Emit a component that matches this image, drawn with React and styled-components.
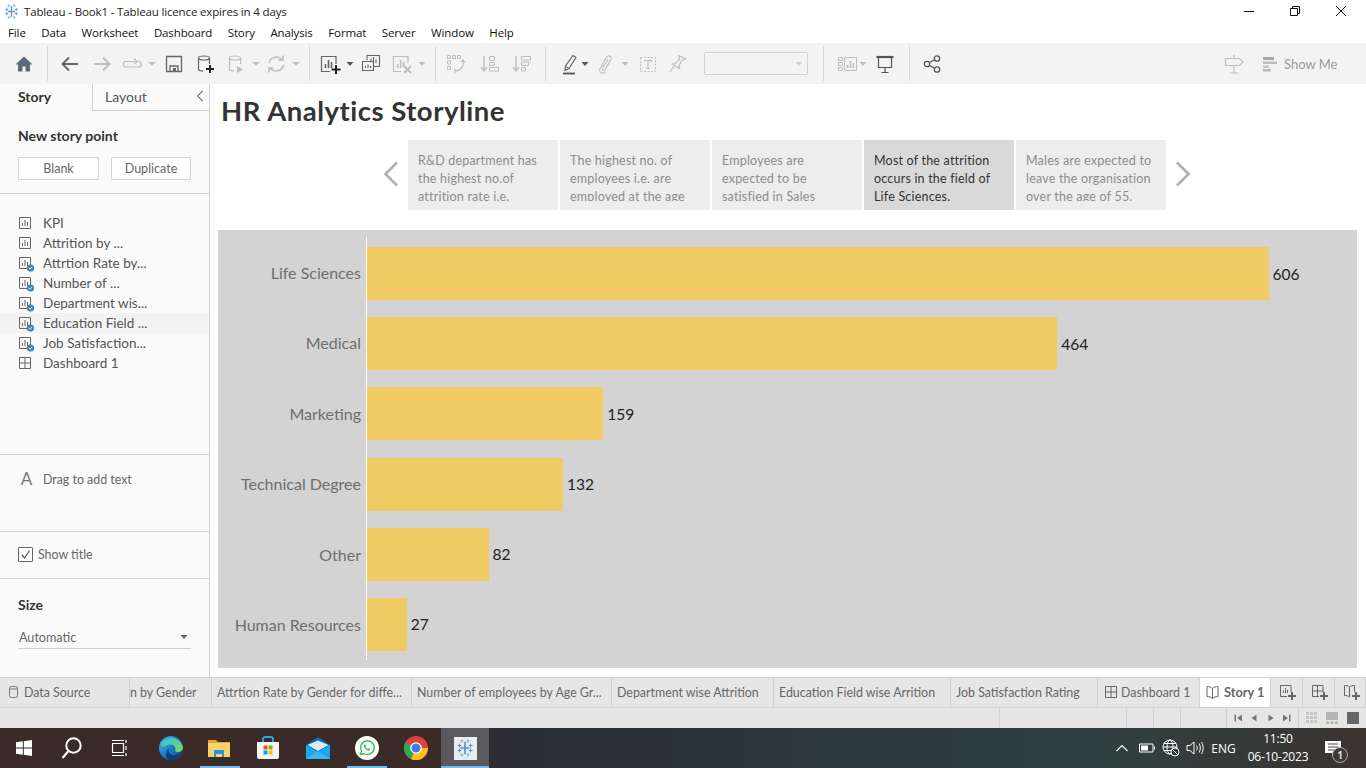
import React from "react";
import styled, { createGlobalStyle } from "styled-components";

const Global = createGlobalStyle`
  html, body { margin: 0; padding: 0; background: #fff; }
  #root { width: 1366px; height: 768px; overflow: hidden; }
  * { box-sizing: border-box; }
`;

const Page = styled.div`
  width: 1366px; height: 768px; display: flex; flex-direction: column;
  font-family: "Lato", "Liberation Sans", sans-serif; color: #555; overflow: hidden;
`;

/* ---------- title + menu ---------- */
const TitleBar = styled.div`
  height: 22px; display: flex; align-items: center; padding-left: 3px; background: #fff;
  font: 11.5px "Open Sans", "Noto Sans", sans-serif; letter-spacing: -0.15px; color: #222;
`;
const TitleText = styled.span` margin-left: 4px; `;
const WinButtons = styled.div` margin-left: auto; display: flex; height: 22px; padding-right: 2px; `;
const WinBtn = styled.div` width: 46px; display: flex; align-items: center; justify-content: center; `;
const MenuBar = styled.div`
  height: 21px; display: flex; align-items: center; padding-left: 8px; gap: 15.55px; background: #fff;
  font: 11.5px "Open Sans", "Noto Sans", sans-serif; letter-spacing: -0.12px; color: #111;
`;

/* ---------- toolbar ---------- */
const ToolBar = styled.div`
  height: 41px; background: #f3f3f3; display: flex; align-items: center; flex: none;
`;
const ToolSlot = styled.div`
  flex: none; width: ${p => p.$w}px; margin-left: ${p => p.$ml}px; height: 24px;
  display: flex; align-items: center; justify-content: center;
`;
const ToolSep = styled.div`
  flex: none; width: 1px; height: 35px; background: #d6d6d6; margin-left: ${p => p.$ml}px;
`;
const ToolSelect = styled.div`
  flex: none; width: 104px; height: 23px; margin-left: ${p => p.$ml}px; border: 1px solid #d2d2d2; border-radius: 2px;
  display: flex; align-items: center; justify-content: flex-end; padding-right: 4px;
`;
const ShowMe = styled.div`
  flex: none; display: flex; align-items: center; gap: 6px; margin-left: ${p => p.$ml}px; color: #9a9a9a; font-size: 13px;
`;

/* ---------- body ---------- */
const Body = styled.div` height: 593px; display: flex; flex: none; `;
const Side = styled.aside`
  width: 210px; flex: none; background: #fafafa; border-right: 1px solid #d4d4d4; display: flex; flex-direction: column;
`;
const SideTabs = styled.div` height: 27px; display: flex; flex: none; `;
const StoryTab = styled.div`
  width: 93px; border-right: 1px solid #d0d0d0; padding: 4px 0 0 18px; font-size: 14px; font-weight: 700; color: #333;
`;
const LayoutTab = styled.div`
  flex: 1; border-bottom: 1px solid #d0d0d0; padding: 4px 0 0 12px; font-size: 14px; color: #555;
  display: flex; justify-content: space-between;
`;
const Chevron = styled.span` padding: 2px 5px 0 0; line-height: 0; `;
const Section = styled.section`
  height: ${p => p.$h}px; flex: none; border-bottom: 1px solid #d0d0d0; padding: ${p => p.$pad || "0"};
`;
const LastSection = styled.section` flex: 1; padding: 18px 18px 0; `;
const SectionTitle = styled.div` font-size: 14px; font-weight: 700; color: #333; line-height: 16px; `;
const SideBtns = styled.div` display: flex; gap: 12px; margin-top: 13px; `;
const SideBtn = styled.div`
  width: ${p => p.$w}px; height: 23px; border: 1px solid #d2d2d2; border-radius: 1px; background: #fff;
  display: flex; align-items: center; justify-content: center; font-size: 12.5px; color: #666;
`;
const StoryList = styled.ul` list-style: none; margin: 0; padding: 0; `;
const StoryRow = styled.li`
  height: 20px; display: flex; align-items: center; padding-left: 18px; gap: 9px; font-size: 13.5px; color: #555;
  background: ${p => (p.$on ? "#f3f3f3" : "transparent")};
`;
const ListIcon = styled.span` width: 16px; flex: none; `;
const DragRow = styled.div` display: flex; align-items: center; padding: 14px 0 0 20px; gap: 10px; font-size: 12.4px; color: #666; `;
const BigA = styled.span` font-size: 17px; color: #777; width: 13px; text-align: center; line-height: 20px; `;
const CheckRow = styled.div` display: flex; align-items: center; gap: 5px; padding: 15px 0 0 18px; font-size: 12.4px; color: #666; `;
const CheckBox = styled.div`
  width: 15px; height: 15px; border: 1px solid #666; border-radius: 1px; background: #fff;
  display: flex; align-items: center; justify-content: center;
`;
const SizeSelect = styled.div`
  margin-top: 13px; height: 23px; border-bottom: 1px solid #cfcfcf; display: flex; align-items: center;
  justify-content: space-between; padding: 0 3px 0 1px; font-size: 12.6px; color: #666;
`;

/* ---------- story ---------- */
const Main = styled.main` flex: 1; background: #fff; display: flex; flex-direction: column; padding: 0 9px 9px 8px; min-width: 0; `;
const StoryTitle = styled.h1`
  margin: 0; height: 56px; padding: 10px 0 0 3px; font-size: 27.5px; line-height: 34px; font-weight: 700; color: #333; letter-spacing: 0.5px;
`;
const Nav = styled.div` height: 70px; display: flex; align-items: center; justify-content: center; flex: none; padding-right: 1px; `;
const Arrow = styled.div` width: 34px; display: flex; justify-content: center; padding-bottom: 2px; `;
const Points = styled.div` display: flex; gap: 2px; `;
const Point = styled.div`
  width: 150px; height: 70px; overflow: hidden; padding: 12px 10px 0 10px; font-size: 12.5px; line-height: 18px; letter-spacing: 0.2px;
  background: ${p => (p.$on ? "#d9d9d9" : "#ededed")}; color: ${p => (p.$on ? "#333" : "#8c8c8c")};
`;
const PointClip = styled.div` height: 49px; overflow: hidden; `;
const Chart = styled.div`
  margin-top: 20px; flex: 1; background: #d3d3d3; display: grid; grid-template-columns: 148px 1fr; padding: 7px 0 8px;
`;
const Labels = styled.div` display: flex; flex-direction: column; gap: 17.4px; padding: 9px 5px 0 0; `;
const Label = styled.div`
  height: 53px; display: flex; align-items: center; justify-content: flex-end; font-size: 16px; color: #6e6e6e;
`;
const Plot = styled.div` border-left: 1px solid #fff; display: flex; flex-direction: column; gap: 17.2px; padding-top: 10px; `;
const BarRow = styled.div` height: 53px; display: flex; align-items: center; gap: 4px; `;
const Bar = styled.div` height: 53px; background: #f0cb63; `;
const Value = styled.span` font-size: 15.5px; color: #222; `;

/* ---------- tabs + status ---------- */
const Tabs = styled.div`
  height: 31px; flex: none; display: flex; background: #e6e6e6; border-top: 1px solid #d2d2d2; border-bottom: 1px solid #d2d2d2;
`;
const Tab = styled.div`
  width: ${p => p.$w}px; flex: none; display: flex; align-items: center;
  padding: 0 0 1px ${p => (p.$pad === undefined ? 5 : p.$pad)}px; gap: ${p => p.$gap || 5}px; border-right: 1px solid #d2d2d2; color: #666; white-space: nowrap;
  background: ${p => (p.$on ? "#fff" : "transparent")};
  font-size: ${p => (p.$on ? 12.8 : 12.4)}px;
  font-weight: ${p => (p.$on ? 700 : 400)};
`;
const Status = styled.div` height: 20px; flex: none; display: flex; background: #e6e6e6; `;
const StatusCell = styled.div`
  width: ${p => p.$w}px; flex: none; border-right: 1px solid #d2d2d2; display: flex; align-items: center; justify-content: center;
`;
const StatusFill = styled.div` display: flex; align-items: center; flex: 1; justify-content: space-around; padding: 0 3px; `;

/* ---------- taskbar ---------- */
const Taskbar = styled.footer`
  height: 40px; flex: none; display: flex; align-items: center; color: #fff;
  background: linear-gradient(90deg, #3a2a28 0%, #3a2a28 32%, #2a2d36 38%, #2c3a40 65%, #30403f 82%, #3b3431 100%);
  font: 12px "Open Sans", "Noto Sans", sans-serif;
`;
const TaskSlot = styled.div`
  width: ${p => p.$w}px; margin-left: ${p => p.$ml || 0}px; flex: none; height: 40px; display: flex; align-items: center; justify-content: center; position: relative;
  background: ${p => (p.$on ? "#5a5a5e" : "transparent")};
`;
const Running = styled.span`
  position: absolute; left: ${p => p.$l}px; right: ${p => p.$r}px; bottom: 0; height: 2px; background: #76b9ed;
`;
const TileBox = styled.div`
  background: #e9edf0; width: 23px; height: 23px; display: flex; align-items: center; justify-content: center;
`;
const Tray = styled.div` margin-left: auto; display: flex; align-items: center; height: 40px; `;
const TraySlot = styled.div` width: ${p => p.$w}px; display: flex; align-items: center; justify-content: center; flex: none; `;
const Clock = styled.div` width: 76px; text-align: center; line-height: 18px; font-size: 12px; letter-spacing: -0.2px; `;
const Notify = styled.div` width: 50px; height: 40px; padding-left: 9px; display: flex; align-items: center; position: relative; `;
const Badge = styled.span`
  position: absolute; left: 16px; top: 19px; width: 16px; height: 16px; border-radius: 50%; background: #3a3a3a; border: 1px solid #aaa;
  font-size: 10px; line-height: 14px; text-align: center; font-weight: 700; color: #ddd;
`;

/* ---------- icons ---------- */
const D = "#666";
const L = "#bdbdbd";
const Svg = ({ w = 24, h = 24, children }) => (
  <svg width={w} height={h} viewBox={`0 0 ${w} ${h}`} fill="none" style={{ display: "block", overflow: "visible" }}>{children}</svg>
);
const Caret = ({ c = L }) => <Svg w={8} h={6}><path d="M0.5 1h7L4 5z" fill={c} /></Svg>;
const Home = () => <Svg><path d="M12 4.5 3.5 12.5H6v7h4.5v-5h3v5H18v-7h2.5z" fill="#5b6b7b" /></Svg>;
const Back = ({ c = D, flip }) => (
  <Svg><path d={flip ? "M4 12h15M13 5.5l6.500 6.500-6.500 6.500" : "M20 12H5M11 5.500 4.500 12l6.500 6.500"} stroke={c} strokeWidth="2" /></Svg>
);
const Redo = () => <Svg><path d="M16 9.500h2.500a2.500 2.500 0 0 1 0 5.500H6a2.700 2.700 0 0 1 0-5.500h9" stroke={L} strokeWidth="1.200" /><path d="M14 6.500 17 9.500l-3 2.500" stroke={L} strokeWidth="1.200" /></Svg>;
const Save = () => <Svg><path d="M4.500 4.500h15v15h-15z" stroke={D} strokeWidth="1.300" /><path d="M8 19v-5h8v5" stroke={D} strokeWidth="1.300" /><path d="M11 16h3v3h-3z" fill={D} /></Svg>;
const Cyl = ({ c }) => <><ellipse cx="11" cy="6" rx="5.500" ry="2" stroke={c} strokeWidth="1.200" /><path d="M5.500 6v11c0 1.200 2 2 4.500 2M16.500 6v6" stroke={c} strokeWidth="1.200" /></>;
const DsAdd = () => <Svg><Cyl c={D} /><path d="M17 13v8M13 17h8" stroke="#222" strokeWidth="2" /></Svg>;
const DsRun = () => <Svg><Cyl c={L} /><path d="M13 14l6 3.500-6 3.500z" fill={L} /></Svg>;
const Refresh = () => <Svg><path d="M5 11a7.500 7.500 0 0 1 13-3.500M19.500 13a7.500 7.500 0 0 1-13 3.500" stroke={L} strokeWidth="1.500" /><path d="M19 3.500V8h-4.500M5 20.500V16h4.500" stroke={L} strokeWidth="1.500" /></Svg>;
const NewSheet = () => <Svg w={26} h={24}><path d="M18 12V4.500H3.500v15H12" stroke={D} strokeWidth="1.200" /><path d="M7.500 16v-4M10.500 16V8M13.500 16v-6" stroke={D} strokeWidth="1.600" /><path d="M18 13v9M13.500 17.500h9" stroke="#222" strokeWidth="2" /></Svg>;
const Dup = () => <Svg><path d="M8 8V3.500h12.500v11H15" stroke={D} strokeWidth="1.100" /><path d="M3.500 9.500h11v9h-11z" stroke={D} strokeWidth="1.100" fill="#f3f3f3" /><path d="M12 9V6.500M14.500 9V5M17 11V7.500M6.500 16v-2M9 16v-3.500M11.500 16v-2" stroke={D} strokeWidth="1.100" /></Svg>;
const Clear = () => <Svg w={26} h={24}><path d="M19 11V4.500H4.500v15H12" stroke={L} strokeWidth="1.200" /><path d="M8.500 16v-4M11.500 16V8M14.500 15v-5" stroke={L} strokeWidth="1.600" /><path d="M15 14l7 7M22 14l-7 7" stroke={L} strokeWidth="2" /></Svg>;
const Swap = () => <Svg><path d="M3.500 3.500h3v3h-3zM8.500 3.500h3v3h-3zM13.500 3.500h3v3h-3zM3.500 9h3v3h-3zM3.500 14.500h3v3h-3z" stroke={L} /><path d="M19 8c1.500 5-1 10-7 11M10 17l2 2-2 2.500M17 10l2-2 2 2.500" stroke={L} strokeWidth="1.200" /></Svg>;
const SortA = () => <Svg><path d="M6 4v14M3 15l3 4 3-4" stroke={L} strokeWidth="1.400" /><path d="M11.500 4.500h5v4h-5zM11.500 10.500h5v3h-5zM11.500 15.500h9v3.500h-9z" stroke={L} /></Svg>;
const SortD = () => <Svg><path d="M6 4v14M3 15l3 4 3-4" stroke={L} strokeWidth="1.400" /><path d="M11.500 4.500h9v3.500h-9zM11.500 10h7v3.500h-7zM11.500 15.500h4v3.500h-4z" stroke={L} /></Svg>;
const Pen = () => <Svg><path d="M16 3.500l3 2-7 11-4 2 .5-4.500z" stroke={D} strokeWidth="1.200" /><path d="M9 14.500l3 2" stroke={D} /><path d="M6 21.500h12" stroke="#555" strokeWidth="1.800" /></Svg>;
const Clip = () => <Svg><path d="M15 7 9.500 16c-1 1.800 1.500 3.200 2.700 1.400L18 7.500c1.500-2.800-2.800-5-4.500-2.300L7 16.500c-2 3.800 3.500 6.500 5.500 3" stroke={L} strokeWidth="1.100" /></Svg>;
const TextBox = () => <Svg><path d="M4.500 5.500h15v14h-15z" stroke={L} strokeDasharray="2 1.500" /><path d="M8.500 10V8.500h7V10M12 8.500V16.500M10.500 16.500h3" stroke={L} strokeWidth="1.100" /></Svg>;
const Pin = () => <Svg><path d="M14 3.500l6.500 3.500-4 1.500-2.500 5.500.5 2.500L7.500 12l2.500-.5 4.500-4z" stroke={L} strokeWidth="1.200" /><path d="M9 14l-4 6" stroke={L} strokeWidth="1.200" /></Svg>;
const ChartGrid = () => <Svg w={24} h={24}><path d="M2.500 5.500h4v3h-4zM2.500 10.500h4v3h-4zM2.500 15.500h4v3h-4zM8.500 5.500h12v13h-12z" stroke={L} /><path d="M11.500 16v-3M14.500 16V9M17.500 16v-5" stroke={L} strokeWidth="1.600" /></Svg>;
const Present = () => <Svg><path d="M3.500 5h17" stroke="#555" strokeWidth="2.200" /><path d="M5.500 5.500V15.500H18.500V5.500M12 15.500V20M8.500 20.500h7" stroke="#555" strokeWidth="1.200" /></Svg>;
const Share = () => <Svg><circle cx="17" cy="6.500" r="2.700" stroke="#555" strokeWidth="1.300" /><circle cx="17" cy="17.500" r="2.700" stroke="#555" strokeWidth="1.300" /><circle cx="7" cy="12" r="2.700" stroke="#555" strokeWidth="1.300" /><path d="M9.500 10.500l5-2.700M9.500 13.500l5 2.700" stroke="#555" strokeWidth="1.300" /></Svg>;
const Sign = () => <Svg><path d="M3.500 6.500h14l3.500 3.500-3.500 3.500h-14z" stroke={L} strokeWidth="1.200" /><path d="M12 3v3.500M12 13.500V21M8 21h8" stroke={L} strokeWidth="1.200" /></Svg>;
const ShowMeIcon = () => <Svg w={15} h={16}><path d="M0 1h11v3H0z" fill="#a8a8a8" /><path d="M0 5.500h14v2.500H0z" fill="#bcbcbc" /><path d="M0 9.500h6V12H0z" fill="#c8c8c8" /><path d="M0 13h8v2.500H0z" fill="#bcbcbc" /></Svg>;
const SmallChev = () => <Svg w={8} h={12}><path d="M6.500 1 1.500 6l5 5" stroke="#777" strokeWidth="1.100" /></Svg>;
const NavChev = ({ flip }) => <Svg w={16} h={26}><path d={flip ? "M2 1.500 13.500 13 2 24.500" : "M14 1.500 2.500 13 14 24.500"} stroke="#b2b2b2" strokeWidth="2.800" /></Svg>;

const SheetIcon = ({ dash }) => (
  <Svg w={16} h={16}>
    <path d="M1.500 2.500h11v11h-11z" stroke="#666" strokeWidth="1" />
    <path d="M4.500 11V8M7 11V5M9.500 11V7" stroke="#666" strokeWidth="1" />
    {dash && <circle cx="12.500" cy="13" r="3.600" fill="#3c85ab" />}
    {dash && <path d="M10.700 13l1.300 1.300 2.200-2.400" stroke="#fff" strokeWidth="0.900" />}
  </Svg>
);
const GridIcon = ({ c = "#666" }) => <Svg w={14} h={16}><path d="M1.500 2.500h11v11h-11zM7 2.500v11M1.500 8h11" stroke={c} /></Svg>;
const BookIcon = () => <Svg w={13} h={14}><path d="M6.500 3.500C5 2 3 1.500 1 1.500v10c2 0 4 .5 5.500 2 1.500-1.500 3.500-2 5.500-2v-10c-2 0-4 .5-5.500 2zM6.500 3.500v10" stroke="#666" /></Svg>;
const DbIcon = () => <Svg w={11} h={14}><rect x="1.500" y="1.500" width="8" height="11" rx="2" stroke="#777" /><path d="M1.500 4h8" stroke="#777" /></Svg>;
const AddSheet = () => <Svg w={18} h={18}><path d="M12 9V2.500H1.500v11H8" stroke="#666" /><path d="M4.500 10V7.500M6.500 10V5M8.500 10V7" stroke="#666" /><path d="M13 9v8M9 13h8" stroke="#666" strokeWidth="2" /></Svg>;
const AddDash = () => <Svg w={18} h={18}><path d="M12 9V2.500H1.500v11H8M6.500 2.500v11M1.500 8h10.500" stroke="#666" /><path d="M13 9v8M9 13h8" stroke="#666" strokeWidth="2" /></Svg>;
const AddStory = () => <Svg w={18} h={18}><path d="M6.500 4C5 2.800 3.500 2.500 1.500 2.500v10c2 0 3.500.3 5 1.500M6.500 4C8 2.800 9.500 2.500 11.500 2.500V9M6.500 4v10" stroke="#666" /><path d="M13 9v8M9 13h8" stroke="#666" strokeWidth="2" /></Svg>;

const NavFirst = () => <Svg w={10} h={10}><path d="M1.500 1.500h1.500v7H1.500zM9 1.500v7L4 5z" fill="#777" /></Svg>;
const NavPrev = () => <Svg w={10} h={10}><path d="M7.500 1.500v7L2.500 5z" fill="#777" /></Svg>;
const NavNext = () => <Svg w={10} h={10}><path d="M2.500 1.500v7l5-3.500z" fill="#777" /></Svg>;
const NavLast = () => <Svg w={10} h={10}><path d="M7 1.500h1.500v7H7zM1 1.500v7L6 5z" fill="#777" /></Svg>;
const ViewGrid = () => (
  <Svg w={12} h={12}>
    {[0, 4, 8].flatMap(y => [0, 4, 8].map(x => <rect key={`${x}${y}`} x={x} y={y} width="3" height="3" fill="#c6c6c6" />))}
  </Svg>
);
const ViewStrip = () => <Svg w={12} h={12}><path d="M0 0h12v8H0z" fill="#b4b4b4" /><path d="M0 9.500h3V12H0zM4.500 9.500h3V12h-3zM9 9.500h3V12H9z" fill="#b4b4b4" /></Svg>;
const ViewFull = () => <Svg w={12} h={12}><path d="M0 0h12v12H0z" fill="#666" /></Svg>;

const Tableau = ({ size = 16, c = "#5b9bc7" }) => (
  <svg width={size} height={size} viewBox="0 0 16 16" fill="none" style={{ display: "block" }}>
    <path d="M8 3v10M4.500 8h7" stroke={c} strokeWidth="1.300" />
    <path d="M3.500 4.500v3M2 6h3M12.500 4.500v3M11 6h3M3.500 8.500v3M2 10h3M12.500 8.500v3M11 10h3" stroke={c} strokeWidth=".8" />
    <path d="M5.500 1v3M4 2.500h3M10.500 1v3M9 2.500h3M5.500 12v3M4 13.500h3M10.500 12v3M9 13.500h3" stroke="#8bb7d6" strokeWidth=".8" />
  </svg>
);

const WinLogo = () => <Svg w={18} h={18}><path d="M1 3.300 7.800 2.300v6.300H1zM8.800 2.200 17 1v7.600H8.800zM1 9.600h6.800v6.200L1 14.800zM8.800 9.600H17V17l-8.200-1.200z" fill="#fff" /></Svg>;
const Search = () => <Svg w={24} h={24}><circle cx="13.500" cy="9.500" r="7.200" stroke="#fff" strokeWidth="2" /><path d="M8.500 15 2.500 22" stroke="#fff" strokeWidth="2.200" /></Svg>;
const TaskView = () => <Svg w={18} h={18}><path d="M1.500 4.500h11v9h-11zM1 1.500h12M1 16.500h12M15 1v3M15 7v4M15 14v3" stroke="#fff" strokeWidth="1.200" /></Svg>;
const Edge = () => (
  <svg width="24" height="24" viewBox="0 0 24 24" style={{ display: "block" }}>
    <defs><linearGradient id="eg" x1="0" y1="0" x2="1" y2="1"><stop offset="0" stopColor="#2fc1e0" /><stop offset=".55" stopColor="#1a78c9" /><stop offset="1" stopColor="#0c4f8f" /></linearGradient>
      <linearGradient id="eg2" x1="0" y1="0" x2="1" y2="1"><stop offset="0" stopColor="#3bc0e8" /><stop offset="1" stopColor="#72dd5c" /></linearGradient></defs>
    <circle cx="12" cy="12" r="12" fill="url(#eg)" />
    <path d="M2 8C5 1 19-2 24 11c.3 5-6 6-8 4 2-4-2-8-7-6-4 1-6 4-7-1z" fill="url(#eg2)" />
    <path d="M10 12c-2 4 2 8 6 7 3-.5 5-2 7-5-1 5-5 10-11 10-3 0-5-1-5-5 0-3 1-5 3-7z" fill="#0d3f77" />
  </svg>
);
const Folder = () => (
  <Svg w={22} h={18}>
    <path d="M0 1h8l2 2h12v15H0z" fill="#e8a826" /><path d="M0 4h22v14H0z" fill="#f8d36b" />
    <path d="M6 11h10v7h-2v-3H8v3H6z" fill="#2f8fd8" />
  </Svg>
);
const Store = () => (
  <svg width="24" height="24" viewBox="0 0 24 24" style={{ display: "block" }}>
    <path d="M7 6V3a2 2 0 0 1 2-2h6a2 2 0 0 1 2 2v3" stroke="#28a8ea" strokeWidth="1.800" fill="none" />
    <path d="M1 6h22v15a2 2 0 0 1-2 2H3a2 2 0 0 1-2-2z" fill="#f5f5f5" />
    <path d="M7.500 9.500h4v4h-4z" fill="#f25022" /><path d="M12.500 9.500h4v4h-4z" fill="#7fba00" />
    <path d="M7.500 14.500h4v4h-4z" fill="#00a4ef" /><path d="M12.500 14.500h4v4h-4z" fill="#ffb900" />
  </svg>
);
const Mail = () => (
  <Svg w={24} h={22}>
    <path d="M0 8 12 0l12 8v14H0z" fill="#0f6cbd" /><path d="M1.500 8 12 3.500 22.500 8 12 14z" fill="#dcecf8" /><path d="M0 8l12 7 12-7v14H0z" fill="#1ea7ee" /><path d="M0 22l12-8 12 8z" fill="#3fb6f0" />
  </Svg>
);
const WhatsApp = () => (
  <svg width="24" height="24" viewBox="0 0 24 24" style={{ display: "block" }}>
    <circle cx="12" cy="12" r="12" fill="#fff" />
    <path d="M5.500 18.500 6.500 15A6.800 6.800 0 1 1 9 17.500z" fill="none" stroke="#30c25a" strokeWidth="1.400" />
    <path d="M9.500 8.500c-1 1-.8 2.500.8 4.300s3.300 2.300 4.400 1.300l.5-1-1.800-.9-.7.700c-1-.4-1.800-1.200-2.300-2.200l.6-.7-.8-1.800z" fill="#30c25a" />
  </svg>
);
const Chrome = () => (
  <svg width="24" height="24" viewBox="0 0 24 24" style={{ display: "block" }}>
    <circle cx="12" cy="12" r="12" fill="#e0413a" />
    <path d="M12 12 1.600 6A12 12 0 0 0 7 23z" fill="#2fa84f" />
    <path d="M12 12h12A12 12 0 0 1 7 23z" fill="#f9c31e" />
    <circle cx="12" cy="12" r="5.800" fill="#fff" /><circle cx="12" cy="12" r="4.500" fill="#3f7de8" />
  </svg>
);

const Up = () => <Svg w={14} h={10}><path d="M1.500 8 7 2.500 12.500 8" stroke="#fff" strokeWidth="1.100" /></Svg>;
const Battery = () => <Svg w={16} h={10}><path d="M.5 1h13.500v8H.5z" stroke="#fff" /><path d="M2 2.500h7v5H2z" fill="#fff" /><path d="M15 3.500h1v3h-1z" fill="#fff" /></Svg>;
const Globe = () => (
  <Svg w={18} h={18}>
    <circle cx="8" cy="8" r="7" stroke="#fff" /><ellipse cx="8" cy="8" rx="3" ry="7" stroke="#fff" /><path d="M1 8h14M2 4.500h12M2 11.500h12" stroke="#fff" />
    <circle cx="13" cy="13" r="4" fill="#2c3a40" stroke="#fff" /><path d="M10.500 10.500l5 5" stroke="#fff" />
  </Svg>
);
const Speaker = () => <Svg w={18} h={16}><path d="M1 5.500h3L8 2v12l-4-3.500H1z" stroke="#fff" /><path d="M10.500 5.500c1 1.500 1 3.500 0 5M13 3.500c1.800 2.500 1.800 6.500 0 9M15.500 2c2.200 3.500 2.200 8.500 0 12" stroke="#fff" /></Svg>;
const Msg = () => <Svg w={16} h={16}><path d="M0 1h16v12h-6l-3 3v-3H0z" fill="#fff" /><path d="M3 4h10M3 7h10M3 10h7" stroke="#444" /></Svg>;

/* ---------- data ---------- */
const tools = [
  ["i", Home, 24], ["s", 47], ["i", Back, 70], ["i", () => <Back c={L} flip />, 102], ["i", Redo, 132], ["c", 152], ["i", Save, 174], ["i", DsAdd, 205],
  ["i", DsRun, 236], ["c", 256], ["i", Refresh, 276], ["c", 296], ["s", 309], ["i", NewSheet, 331], ["c", 350, "#555"], ["i", Dup, 371], ["i", Clear, 402], ["c", 422],
  ["s", 435], ["i", Swap, 456], ["i", SortA, 490], ["i", SortD, 522], ["s", 545], ["i", Pen, 569], ["c", 585, "#555"], ["i", Clip, 605], ["c", 625],
  ["i", TextBox, 648], ["i", Pin, 677],
];
const tools2 = [
  ["s", 823], ["i", ChartGrid, 848], ["c", 863], ["i", Present, 885], ["s", 909], ["i", Share, 932], ["i", Sign, 1234],
];

const renderTools = (list, start) => {
  let right = start;
  return list.map((t, idx) => {
    const kind = t[0];
    if (kind === "s") {
      const ml = t[1] - right; right = t[1] + 1;
      return <ToolSep key={idx} $ml={ml} />;
    }
    if (kind === "c") {
      const left = t[1] - 4; const ml = left - right; right = left + 8;
      return <ToolSlot key={idx} $w={8} $ml={ml}><Caret c={t[2]} /></ToolSlot>;
    }
    const Ico = t[1];
    const left = t[2] - 12; const ml = left - right; right = left + 24;
    return <ToolSlot key={idx} $w={24} $ml={ml}><Ico /></ToolSlot>;
  });
};

const points = [
  "R&D department has the highest no.of attrition rate i.e.",
  "The highest no. of employees i.e. are employed at the age",
  "Employees are expected to be satisfied in Sales",
  "Most of the attrition occurs in the field of Life Sciences.",
  "Males are expected to leave the organisation over the age of 55.",
];
const rows = [
  ["Life Sciences", 606], ["Medical", 464], ["Marketing", 159], ["Technical Degree", 132], ["Other", 82], ["Human Resources", 27],
];
const stories = [
  ["KPI", 0], ["Attrition by ...", 0], ["Attrtion Rate by...", 1], ["Number of ...", 1], ["Department wis...", 1], ["Education Field ...", 1, true], ["Job Satisfaction...", 1],
];

export default function App() {
  return (
    <Page>
      <Global />
      <TitleBar>
        <Tableau size={17} />
        <TitleText>Tableau - Book1 - Tableau licence expires in 4 days</TitleText>
        <WinButtons>
          <WinBtn><Svg w={12} h={12}><path d="M1 6.500h10" stroke="#111" /></Svg></WinBtn>
          <WinBtn><Svg w={12} h={12}><path d="M1.500 3.500h7v7h-7zM3.500 3.500v-2h7v7h-2" stroke="#111" /></Svg></WinBtn>
          <WinBtn><Svg w={12} h={12}><path d="M1 1l10 10M11 1 1 11" stroke="#111" /></Svg></WinBtn>
        </WinButtons>
      </TitleBar>
      <MenuBar>
        {["File", "Data", "Worksheet", "Dashboard", "Story", "Analysis", "Format", "Server", "Window", "Help"].map(m => <span key={m}>{m}</span>)}
      </MenuBar>
      <ToolBar>
        {renderTools(tools, 0)}
        <ToolSelect $ml={15}><Caret c="#cfcfcf" /></ToolSelect>
        {renderTools(tools2, 808)}
        <ShowMe $ml={17}><ShowMeIcon />Show Me</ShowMe>
      </ToolBar>
      <Body>
        <Side>
          <SideTabs>
            <StoryTab>Story</StoryTab>
            <LayoutTab>Layout<Chevron><SmallChev /></Chevron></LayoutTab>
          </SideTabs>
          <Section $h={83} $pad="17px 18px 0">
            <SectionTitle>New story point</SectionTitle>
            <SideBtns><SideBtn $w={81}>Blank</SideBtn><SideBtn $w={80}>Duplicate</SideBtn></SideBtns>
          </Section>
          <Section $h={261} $pad="19px 0 0">
            <StoryList>
              {stories.map(([t, d, on]) => (
                <StoryRow key={t} $on={on}><ListIcon><SheetIcon dash={!!d} /></ListIcon><span>{t}</span></StoryRow>
              ))}
              <StoryRow><ListIcon><GridIcon /></ListIcon><span>Dashboard 1</span></StoryRow>
            </StoryList>
          </Section>
          <Section $h={77}><DragRow><BigA>A</BigA>Drag to add text</DragRow></Section>
          <Section $h={47}>
            <CheckRow>
              <CheckBox><Svg w={11} h={11}><path d="M2 6l2.500 3L9.500 1.500" stroke="#555" strokeWidth="1.200" /></Svg></CheckBox>
              Show title
            </CheckRow>
          </Section>
          <LastSection>
            <SectionTitle>Size</SectionTitle>
            <SizeSelect>Automatic<Caret c="#666" /></SizeSelect>
          </LastSection>
        </Side>
        <Main>
          <StoryTitle>HR Analytics Storyline</StoryTitle>
          <Nav>
            <Arrow><NavChev /></Arrow>
            <Points>
              {points.map((p, i) => <Point key={p} $on={i === 3}><PointClip>{p}</PointClip></Point>)}
            </Points>
            <Arrow><NavChev flip /></Arrow>
          </Nav>
          <Chart>
            <Labels>{rows.map(([n]) => <Label key={n}>{n}</Label>)}</Labels>
            <Plot>
              {rows.map(([n, v]) => (
                <BarRow key={n}>
                  <Bar style={{ width: `${v * 1.4885 - 0.5}px` }} />
                  <Value>{v}</Value>
                </BarRow>
              ))}
            </Plot>
          </Chart>
        </Main>
      </Body>
      <Tabs>
        <Tab $w={130} $pad={8}><DbIcon />Data Source</Tab>
        <Tab $w={82} $pad={0}>n by Gender</Tab>
        <Tab $w={200}>Attrtion Rate by Gender for diffe...</Tab>
        <Tab $w={200}>Number of employees by Age Gr...</Tab>
        <Tab $w={162}>Department wise Attrition</Tab>
        <Tab $w={177}>Education Field wise Arrition</Tab>
        <Tab $w={147}>Job Satisfaction Rating</Tab>
        <Tab $w={102} $pad={6} $gap={3}><GridIcon />Dashboard 1</Tab>
        <Tab $w={71} $on $pad={6}><BookIcon />Story 1</Tab>
        <Tab $w={32} $pad={8}><AddSheet /></Tab>
        <Tab $w={32} $pad={8}><AddDash /></Tab>
        <Tab $w={31} $pad={8}><AddStory /></Tab>
      </Tabs>
      <Status>
        <StatusCell $w={1000} />
        <StatusCell $w={127} />
        <StatusCell $w={27} />
        <StatusCell $w={27} />
        <StatusCell $w={46} />
        <StatusCell $w={72}><StatusFill><NavFirst /><NavPrev /><NavNext /><NavLast /></StatusFill></StatusCell>
        <StatusFill><ViewGrid /><ViewStrip /><ViewFull /></StatusFill>
      </Status>
      <Taskbar>
        <TaskSlot $w={48}><WinLogo /></TaskSlot>
        <TaskSlot $w={48}><Search /></TaskSlot>
        <TaskSlot $w={48}><TaskView /></TaskSlot>
        <TaskSlot $w={48} $ml={3}><Edge /></TaskSlot>
        <TaskSlot $w={48}><Folder /><Running $l={5} $r={3} /></TaskSlot>
        <TaskSlot $w={50}><Store /></TaskSlot>
        <TaskSlot $w={50}><Mail /></TaskSlot>
        <TaskSlot $w={48}><WhatsApp /><Running $l={4} $r={4} /></TaskSlot>
        <TaskSlot $w={50}><Chrome /></TaskSlot>
        <TaskSlot $w={48} $on><TileBox><Tableau size={20} c="#4f93c4" /></TileBox><Running $l={0} $r={0} /></TaskSlot>
        <Tray>
          <TraySlot $w={24}><Up /></TraySlot>
          <TraySlot $w={25}><Battery /></TraySlot>
          <TraySlot $w={24}><Globe /></TraySlot>
          <TraySlot $w={24}><Speaker /></TraySlot>
          <TraySlot $w={33}>ENG</TraySlot>
          <Clock>11:50<br />06-10-2023</Clock>
          <Notify><Msg /><Badge>1</Badge></Notify>
        </Tray>
      </Taskbar>
    </Page>
  );
}
